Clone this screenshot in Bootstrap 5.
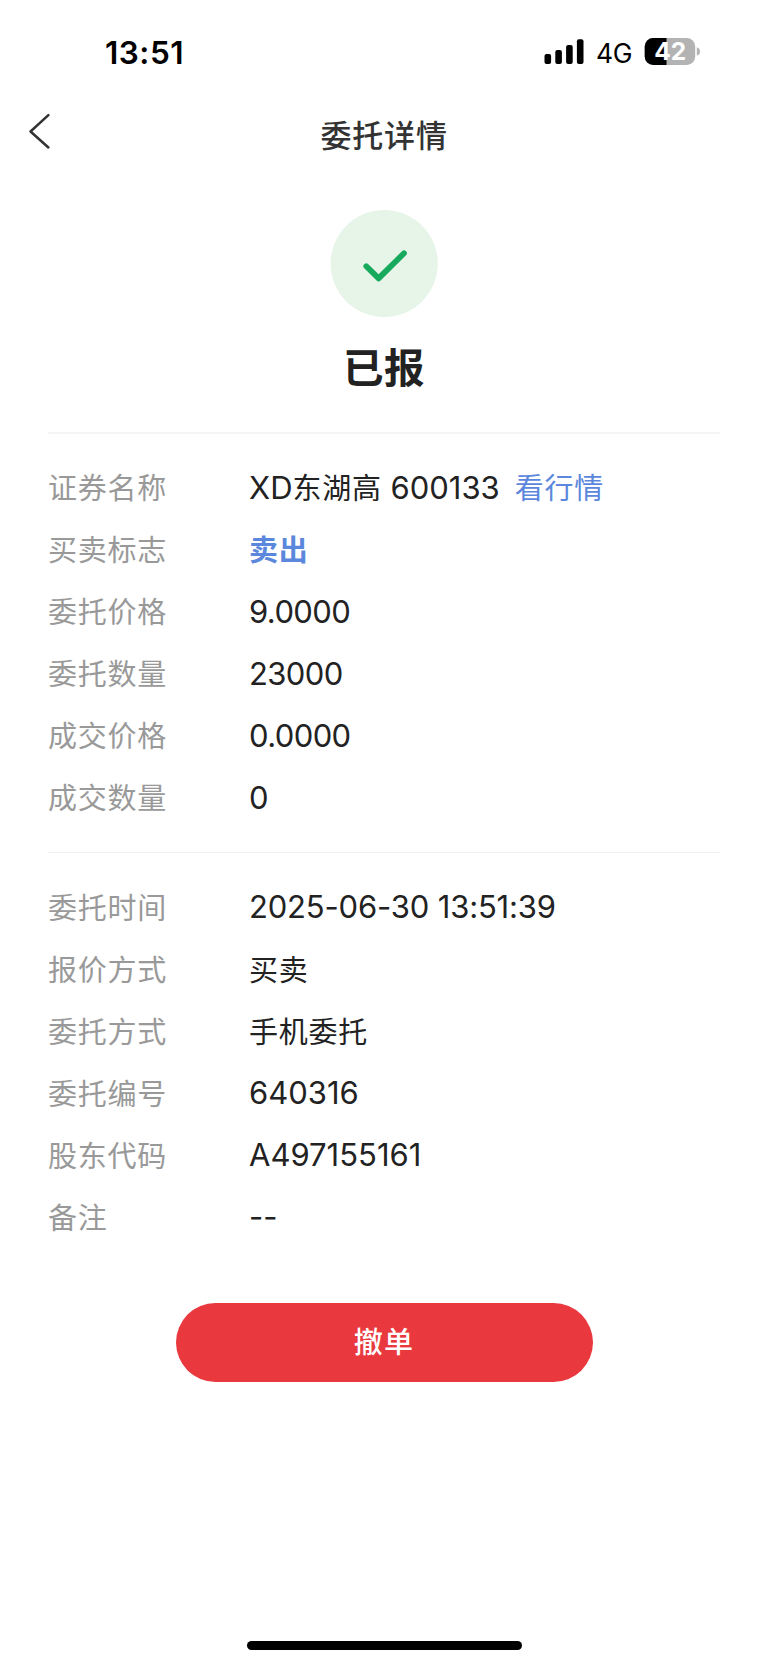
<!DOCTYPE html>
<html lang="zh-CN">
<head>
<meta charset="utf-8">
<meta name="viewport" content="width=device-width, initial-scale=1">
<title>委托详情</title>
<link href="https://cdn.jsdelivr.net/npm/bootstrap@5.3.0/dist/css/bootstrap.min.css" rel="stylesheet">
<style>
  body { font-family: Inter, "Noto Sans CJK SC", sans-serif; color: #222; background: #fff; }
  .screen { width: 768px; height: 1665px; }
  .statusbar { height: 96px; padding: 0 68px 0 105px; color: #000; }
  .clock { font-size: 31.5px; font-weight: 600; line-height: 40px; margin-top: 33px; letter-spacing: .5px; }
  .network { font-size: 26.5px; line-height: 32px; margin: 37px 12px 0 12px; letter-spacing: -.4px; }
  .signal { margin-top: 39px; }
  .battery { margin-top: 37px; }
  .titlebar { height: 80px; padding-left: 28px; }
  .titlebar svg { margin-top: 17px; }
  .title-text { font-size: 31px; font-weight: 500; line-height: 44px; letter-spacing: .8px; color: #333; margin: 18px 0 0 268.5px; }
  .result { height: 256px; padding-top: 34px; }
  .result-text { font-size: 40.5px; font-weight: 700; line-height: 58px; margin-top: 22px; letter-spacing: .6px; }
  .details { margin: 0 48px; }
  .group { border-top: 1px solid #f1f1f1; padding: 23px 0 24px; }
  .group:first-child { border-top: 2px solid #f5f5f5; padding: 23px 0 23px; }
  .item { height: 62px; font-size: 31px; line-height: 62px; }
  .item dt { width: 201px; font-weight: 400; color: #999; }
  .item dd { white-space: pre; }
  .item dt, .zh { font-size: 29px; letter-spacing: .75px; }
  .item dt, dd.zh { padding-top: 1px; }
  .group + .group dt, .group + .group dd.zh { padding-top: 2px; }
  .tight { letter-spacing: -.6px; }
  .stamp { letter-spacing: -.17px; }
  .sell { color: #5b87dc; font-weight: 700; }
  .quote { color: #5b87dc; margin-left: 15px; }
  .cancel { width: 417px; height: 79px; margin-top: 31px; padding: 1px 0 0; background: #e9393f; color: #fff; font-size: 29px; font-weight: 500; letter-spacing: 1.2px; }
  .home-bar { width: 275px; height: 9px; background: #000; margin-bottom: 15px; }
</style>
</head>
<body>
<main class="screen d-flex flex-column overflow-hidden">
  <div class="statusbar d-flex align-items-start">
    <span class="clock me-auto">13:51</span>
    <svg class="signal" width="40" height="26" viewBox="0 0 40 26" aria-hidden="true">
      <rect x="0.5" y="15" width="6.6" height="10" rx="2"/>
      <rect x="11.3" y="11" width="6.6" height="14" rx="2"/>
      <rect x="22.1" y="6" width="6.6" height="19" rx="2"/>
      <rect x="32.9" y="0.3" width="6.6" height="24.7" rx="2"/>
    </svg>
    <span class="network">4G</span>
    <svg class="battery" width="56" height="30" viewBox="0 0 56 30" aria-label="42">
      <defs><clipPath id="cell"><rect x="0.7" y="1" width="50.5" height="27" rx="8.5"/></clipPath></defs>
      <g clip-path="url(#cell)"><rect width="52" height="30" fill="#b3b3b3"/><rect width="22.5" height="30"/></g>
      <path d="M52.8 10.3Q56 11.3 56 14.5T52.8 18.7Z" fill="#b3b3b3"/>
      <text x="26.3" y="23.3" text-anchor="middle" fill="#fff" font-size="24.5" font-weight="700">42</text>
    </svg>
  </div>

  <header class="titlebar d-flex align-items-start">
    <svg width="24" height="38" viewBox="0 0 24 38" fill="none" stroke="#333" stroke-width="2.5" stroke-linecap="round" stroke-linejoin="round"><path d="M20.4 2.2 2.5 18.5 20.4 34.5"/></svg>
    <h1 class="title-text">委托详情</h1>
  </header>

  <section class="result d-flex flex-column align-items-center">
    <svg width="108" height="108" viewBox="0 0 108 108" fill="none">
      <circle cx="54.2" cy="53.6" r="53.6" fill="#e7f5e9"/>
      <path d="M36.3 56.3 48.6 68.4 74 43.3" stroke="#17aa5c" stroke-width="5.8" stroke-linecap="round" stroke-linejoin="round"/>
    </svg>
    <h2 class="result-text mb-0">已报</h2>
  </section>

  <section class="details">
    <dl class="group mb-0">
      <div class="item d-flex"><dt>证券名称</dt><dd class="mb-0">XD<span class="zh">东湖高</span> 600133</dd><dd class="zh quote mb-0">看行情</dd></div>
      <div class="item d-flex"><dt>买卖标志</dt><dd class="zh sell mb-0">卖出</dd></div>
      <div class="item d-flex"><dt>委托价格</dt><dd class="tight mb-0">9.0000</dd></div>
      <div class="item d-flex"><dt>委托数量</dt><dd class="tight mb-0">23000</dd></div>
      <div class="item d-flex"><dt>成交价格</dt><dd class="tight mb-0">0.0000</dd></div>
      <div class="item d-flex"><dt>成交数量</dt><dd class="mb-0">0</dd></div>
    </dl>
    <dl class="group mb-0">
      <div class="item d-flex"><dt>委托时间</dt><dd class="stamp mb-0">2025-06-30 13:51:39</dd></div>
      <div class="item d-flex"><dt>报价方式</dt><dd class="zh mb-0">买卖</dd></div>
      <div class="item d-flex"><dt>委托方式</dt><dd class="zh mb-0">手机委托</dd></div>
      <div class="item d-flex"><dt>委托编号</dt><dd class="mb-0">640316</dd></div>
      <div class="item d-flex"><dt>股东代码</dt><dd class="mb-0">A497155161</dd></div>
      <div class="item d-flex"><dt>备注</dt><dd class="mb-0">--</dd></div>
    </dl>
  </section>

  <button type="button" class="cancel btn rounded-pill border-0 align-self-center flex-shrink-0">撤单</button>
  <div class="home-bar rounded-pill mt-auto mx-auto flex-shrink-0"></div>
</main>
<script src="https://cdn.jsdelivr.net/npm/bootstrap@5.3.0/dist/js/bootstrap.bundle.min.js"></script>
</body>
</html>
